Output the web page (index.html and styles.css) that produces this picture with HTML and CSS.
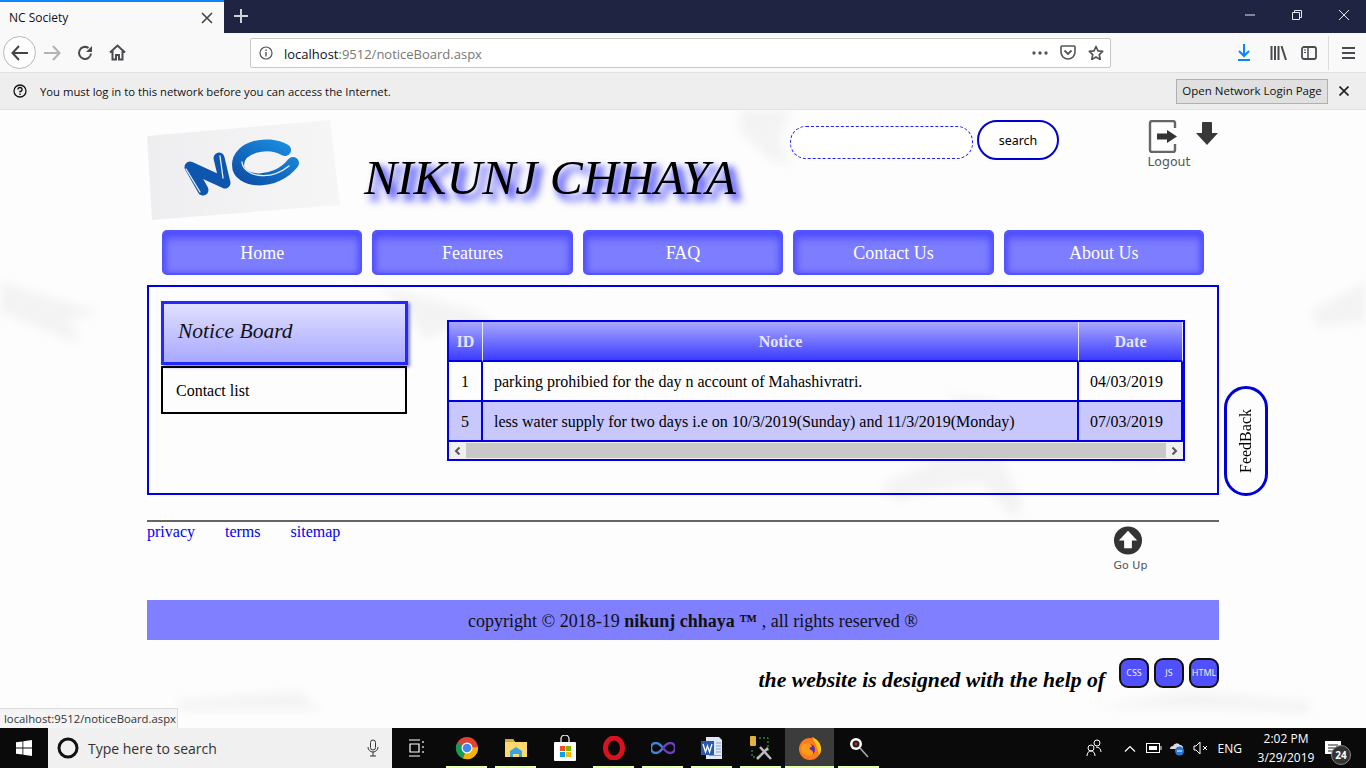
FILE: index.html
```html
<!DOCTYPE html>
<html lang="en">
<head>
<meta charset="utf-8">
<title>NC Society</title>
<link rel="stylesheet" href="styles.css">
</head>
<body>
<div class="tabbar">
  <div class="tab">
    <span class="tab-title">NC Society</span>
    <svg class="tab-close" width="12" height="12" viewBox="0 0 12 12"><path d="M1 1l10 10M11 1L1 11" stroke="#444" stroke-width="1.6"/></svg>
  </div>
  <svg class="tab-new" width="14" height="14" viewBox="0 0 14 14"><path d="M7 0v14M0 7h14" stroke="#cfd0d8" stroke-width="2"/></svg>
  <div class="winctl">
    <svg width="12" height="12" viewBox="0 0 12 12"><path d="M1 6h10" stroke="#e8e8ee" stroke-width="1"/></svg>
    <svg width="12" height="12" viewBox="0 0 12 12"><path d="M1.5 3.5h7v7h-7zM3.5 3.5v-2h7v7h-2" fill="none" stroke="#e8e8ee"/></svg>
    <svg width="12" height="12" viewBox="0 0 12 12"><path d="M1 1l10 10M11 1L1 11" stroke="#e8e8ee" stroke-width="1"/></svg>
  </div>
</div>
<div class="toolbar">
  <div class="back"><svg width="18" height="16" viewBox="0 0 18 16"><path d="M8 1L1.5 8 8 15M2 8h15" fill="none" stroke="#444" stroke-width="2"/></svg></div>
  <svg class="fwd" width="18" height="16" viewBox="0 0 18 16"><path d="M10 1l6.500 7L10 15M16 8H1" fill="none" stroke="#b3b3b3" stroke-width="2"/></svg>
  <svg class="reload" width="16" height="16" viewBox="0 0 16 16"><path d="M14 8.500A6 6 0 1 1 11.500 3" fill="none" stroke="#4a4a4f" stroke-width="2"/><path d="M15 1v6H9z" fill="#4a4a4f"/></svg>
  <svg class="home" width="17" height="17" viewBox="0 0 17 17"><path d="M1 8.500L8.500 1.500 16 8.500M3.500 7v8.500h3.500v-4.500h3v4.500h3.500V7" fill="none" stroke="#4a4a4f" stroke-width="2"/></svg>
  <div class="urlbar">
    <svg class="info" width="14" height="14" viewBox="0 0 14 14"><circle cx="7" cy="7" r="6" fill="none" stroke="#555" stroke-width="1.200"/><path d="M7 6v4.500M7 3.500v1.500" stroke="#555" stroke-width="1.400"/></svg>
    <span class="url"><span class="url-host">localhost</span>:9512/noticeBoard.aspx</span>
    <svg class="dots" width="16" height="4" viewBox="0 0 16 4"><circle cx="2" cy="2" r="1.700" fill="#555"/><circle cx="8" cy="2" r="1.700" fill="#555"/><circle cx="14" cy="2" r="1.700" fill="#555"/></svg>
    <svg class="pocket" width="16" height="15" viewBox="0 0 16 15"><path d="M2 1h12a1 1 0 0 1 1 1v5a7 7 0 0 1-14 0V2a1 1 0 0 1 1-1z" fill="none" stroke="#555" stroke-width="1.600"/><path d="M4.500 5.500L8 9l3.500-3.500" fill="none" stroke="#555" stroke-width="1.800"/></svg>
    <svg class="star" width="16" height="16" viewBox="0 0 16 16"><path d="M8 1.500l2 4.300 4.700.6-3.400 3.300.9 4.700L8 12.100l-4.200 2.300.9-4.700L1.300 6.400 6 5.800z" fill="none" stroke="#555" stroke-width="1.700" stroke-linejoin="round"/></svg>
  </div>
  <svg class="dl" width="14" height="17" viewBox="0 0 14 17"><path d="M7 0v12M2 7l5 5 5-5" fill="none" stroke="#0a84ff" stroke-width="2"/><path d="M1 16h12" stroke="#0a84ff" stroke-width="2"/></svg>
  <svg class="lib" width="17" height="14" viewBox="0 0 17 14"><path d="M1.500 0v14M5 0v14M8.500 0v14M11.500 0l4.500 14" stroke="#4a4a4f" stroke-width="2"/></svg>
  <svg class="side" width="16" height="14" viewBox="0 0 16 14"><rect x="1" y="1" width="14" height="12" rx="2" fill="none" stroke="#4a4a4f" stroke-width="1.800"/><path d="M7 1v12" stroke="#4a4a4f" stroke-width="1.500"/><path d="M3 4h2M3 6.500h2" stroke="#4a4a4f"/></svg>
  <span class="tool-sep"></span>
  <svg class="menu" width="13" height="12" viewBox="0 0 13 12"><path d="M0 1h13M0 6h13M0 11h13" stroke="#4a4a4f" stroke-width="2"/></svg>
</div>
<div class="notify">
  <svg class="help" width="14" height="14" viewBox="0 0 14 14"><circle cx="7" cy="7" r="6" fill="none" stroke="#111" stroke-width="1.300"/><path d="M5 5.500A2 2 0 1 1 7 7.500v1" fill="none" stroke="#111" stroke-width="1.300"/><path d="M7 9.500v1.500" stroke="#111" stroke-width="1.300"/></svg>
  <span class="notify-text">You must log in to this network before you can access the Internet.</span>
  <button class="notify-btn">Open Network Login Page</button>
  <svg class="notify-x" width="10" height="10" viewBox="0 0 10 10"><path d="M.5.500l9 9M9.500.500l-9 9" stroke="#222" stroke-width="1.700"/></svg>
</div>

<div class="page">
  <svg class="watermark" width="1366" height="618" viewBox="0 0 1366 618">
    <g fill="#f3f3f3">
      <path d="M740 0h50l-10 30 10 25-18-5-32-28z"/>
      <path d="M0 172l60 18 40 12-30 8 10 22-20-6-60-24z"/>
      <path d="M1366 172l-56 30 10 15 46-6z"/>
      <path d="M383 178l90 22 24 15-20 12-30-8-20 10z"/>
      <path d="M880 375l60-26 60-3 24 50-12 12-30-36-36 6-50 12z"/>
      <path d="M945 285l55 6-20 18z"/>
      <path d="M1100 345l30-6 60-4-40 18z"/>
      <path d="M180 590l120-8 20 18-140 0z"/>
      <path d="M1100 596l90-14 120 10 0 10z"/>
    </g>
  </svg>
  <div class="wrap">
    <header class="head">
      <svg class="logo" width="193" height="100" viewBox="0 0 193 100">
        <defs>
          <linearGradient id="logoBg" x1="0" y1="0" x2="1" y2="0"><stop offset="0" stop-color="#eeeef0"/><stop offset="1" stop-color="#f6f6f7"/></linearGradient>
          <linearGradient id="logoBlue" x1="0" y1="1" x2="1" y2="0"><stop offset="0" stop-color="#0c4fa8"/><stop offset="1" stop-color="#1a8ee0"/></linearGradient>
        </defs>
        <path d="M0 16L183 0l10 85L5 100z" fill="url(#logoBg)"/>
        <g fill="none" stroke-linecap="round" stroke-linejoin="round">
          <path d="M56 70L43 47 78 63 72 38" stroke="#0d55ad" stroke-width="11"/>
          <path d="M138 30C120 20 91 27 91 45 91 63 128 66 146 43" stroke="url(#logoBlue)" stroke-width="12"/>
          <path d="M39 49L53 72M73 36L76 58M95 42C96 56 122 62 142 46" stroke="#e4f1ff" stroke-width="1.300"/>
        </g>
      </svg>
      <h1 class="brand">NIKUNJ CHHAYA</h1>
      <input class="search-input" type="text" aria-label="search">
      <button class="search-btn">search</button>
      <div class="logout">
        <svg width="30" height="33" viewBox="0 0 30 33"><path d="M27 8V3a2 2 0 0 0-2-2H4a2 2 0 0 0-2 2v27a2 2 0 0 0 2 2h21a2 2 0 0 0 2-2v-6" fill="none" stroke="#666" stroke-width="2.400"/><path d="M9 13.500h10V10l10 6.500L19 23v-3.500H9z" fill="#333"/></svg>
        <span class="logout-text">Logout</span>
      </div>
      <svg class="down" width="22" height="23" viewBox="0 0 22 23"><path d="M6 1a1 1 0 0 1 1-1h8a1 1 0 0 1 1 1v10h6L11 23 0 11h6z" fill="#383838"/></svg>
    </header>

    <nav class="nav">
      <a class="nav-item">Home</a>
      <a class="nav-item">Features</a>
      <a class="nav-item">FAQ</a>
      <a class="nav-item">Contact Us</a>
      <a class="nav-item">About Us</a>
    </nav>

    <main class="main">
      <aside class="side-menu">
        <div class="side-active">Notice Board</div>
        <div class="side-link">Contact list</div>
      </aside>
      <div class="grid-box">
        <table class="grid">
          <colgroup><col class="c-id"><col class="c-notice"><col class="c-date"></colgroup>
          <tr><th>ID</th><th>Notice</th><th>Date</th></tr>
          <tr><td class="center">1</td><td>parking prohibied for the day n account of Mahashivratri.</td><td>04/03/2019</td></tr>
          <tr class="alt"><td class="center">5</td><td>less water supply for two days i.e on 10/3/2019(Sunday) and 11/3/2019(Monday)</td><td>07/03/2019</td></tr>
        </table>
        <div class="hscroll">
          <span class="sc-btn"><svg width="7" height="8" viewBox="0 0 7 8"><path d="M5.500.500L2 4l3.500 3.500" fill="none" stroke="#555" stroke-width="2"/></svg></span>
          <span class="sc-thumb"></span>
          <span class="sc-btn"><svg width="7" height="8" viewBox="0 0 7 8"><path d="M1.500.500L5 4 1.500 7.500" fill="none" stroke="#555" stroke-width="2"/></svg></span>
        </div>
      </div>
    </main>
    <div class="feedback"><span class="feedback-text">FeedBack</span></div>

    <hr class="rule">
    <div class="foot-links">
      <a class="foot-link">privacy</a>
      <a class="foot-link">terms</a>
      <a class="foot-link">sitemap</a>
      <div class="goup">
        <svg width="30" height="29" viewBox="0 0 30 30"><circle cx="15" cy="15" r="14.500" fill="#333"/><path d="M15 5l9.500 10H19v8h-8v-8H5.500z" fill="#fff"/></svg>
        <span class="goup-text">Go Up</span>
      </div>
    </div>
    <div class="copyright">copyright © 2018-19 <b>nikunj chhaya ™</b> , all rights reserved ®</div>
    <div class="credits">
      <span class="credits-text">the website is designed with the help of</span>
      <span class="badge">CSS</span>
      <span class="badge">JS</span>
      <span class="badge">HTML</span>
    </div>
  </div>
  <div class="status">localhost:9512/noticeBoard.aspx</div>
</div>

<div class="taskbar">
  <div class="start"><svg width="16" height="16" viewBox="0 0 16 16"><path d="M0 2.300l6.500-.9v6.200H0zM7.300 1.300L16 0v7.600H7.300zM0 8.400h6.500v6.200L0 13.700zM7.300 8.400H16V16l-8.700-1.300z" fill="#fff"/></svg></div>
  <div class="tsearch">
    <svg width="22" height="22" viewBox="0 0 22 22"><circle cx="11" cy="11" r="9" fill="none" stroke="#111" stroke-width="3"/></svg>
    <span class="tsearch-text">Type here to search</span>
    <svg class="mic" width="12" height="18" viewBox="0 0 12 18"><rect x="3.500" y="1" width="5" height="10" rx="2.500" fill="none" stroke="#333"/><path d="M1 8a5 5 0 0 0 10 0M6 13v4M3 17h6" fill="none" stroke="#333"/></svg>
  </div>
  <div class="apps">
    <span class="app app-tv"><svg width="18" height="18" viewBox="0 0 18 18"><path d="M1 1h11M1 17h11M2 5h9v8H2zM15 2v2M15 7v2M15 12v2" fill="none" stroke="#fff" stroke-width="1.200"/></svg></span>
    <span class="app run"><svg width="24" height="24" viewBox="0 0 24 24"><circle cx="12" cy="12" r="11" fill="#db4437"/><path d="M12 12L2.500 6.500A11 11 0 0 0 8 22.500z" fill="#0f9d58"/><path d="M12 12l11-1a11 11 0 0 1-15 11.500z" fill="#f4b400"/><circle cx="12" cy="12" r="5.500" fill="#fff"/><circle cx="12" cy="12" r="4.300" fill="#4285f4"/></svg></span>
    <span class="app run"><svg width="24" height="20" viewBox="0 0 24 20"><path d="M1 1h8l2 3h12v15H1z" fill="#fbd96f"/><path d="M1 1h8l2 3H1z" fill="#d9a83c"/><path d="M6 19v-6l6-4 6 4v6h-3v-3H9v3z" fill="#3ba4dd"/></svg></span>
    <span class="app"><svg width="22" height="26" viewBox="0 0 22 26"><path d="M7 8V4a4 4 0 0 1 8 0v4" fill="none" stroke="#ddd" stroke-width="1.400"/><rect y="7" width="22" height="19" rx="1" fill="#fff"/><rect x="6" y="11" width="5" height="5" fill="#f25022"/><rect x="12" y="11" width="5" height="5" fill="#7fba00"/><rect x="6" y="17" width="5" height="5" fill="#00a4ef"/><rect x="12" y="17" width="5" height="5" fill="#ffb900"/></svg></span>
    <span class="app run"><svg width="22" height="24" viewBox="0 0 22 24"><ellipse cx="11" cy="12" rx="8.500" ry="10" fill="none" stroke="#d8131f" stroke-width="5"/></svg></span>
    <span class="app run"><svg width="24" height="12" viewBox="0 0 24 12"><path d="M12 6C9 2 7 1 5 1a5 5 0 0 0 0 10c2 0 4-1 7-5z" fill="none" stroke="#3d87d8" stroke-width="2.500"/><path d="M12 6c3-4 5-5 7-5a5 5 0 0 1 0 10c-2 0-4-1-7-5z" fill="none" stroke="#6b3fc4" stroke-width="2.500"/></svg></span>
    <span class="app run"><svg width="22" height="24" viewBox="0 0 22 24"><path d="M5 1h13l3 3v19H5z" fill="#dfe8f4"/><path d="M0 5h13v14H0z" fill="#2a5aa8"/><path d="M15 7h5M15 10h5M15 13h5M15 16h5M8 19.500h12" stroke="#7f9fd0"/><path d="M2 8l2.500 8 2-6 2 6L11 8" fill="none" stroke="#fff" stroke-width="1.300"/></svg></span>
    <span class="app run"><svg width="24" height="26" viewBox="0 0 24 26"><rect x="1" y="1" width="6" height="10" rx="1" fill="#e2b33c"/><path d="M10 3h9v14M3 15v7h6" fill="none" stroke="#4bb54b" stroke-dasharray="2 2"/><path d="M8 24l11-11M11 12l11 12" stroke="#bbb" stroke-width="2.500"/></svg></span>
    <span class="app run active"><svg width="24" height="24" viewBox="0 0 24 24"><circle cx="12" cy="13" r="11" fill="#ff7a1a"/><path d="M14 1c5 2 9 6 9 12 0 3-1 5-2 6-1-6-3-10-7-18z" fill="#ffc21a"/><circle cx="11.500" cy="13.500" r="5.500" fill="#5b2fa8"/><path d="M6 8c4-2 8 0 8 3-3 0-3 2-1 3 3 1 3 6-2 6-4 0-8-3-8-8 0-2 1-3 3-4z" fill="#ff9a1a"/></svg></span>
    <span class="app run"><svg width="20" height="22" viewBox="0 0 20 22"><circle cx="7" cy="7" r="6" fill="#fff"/><circle cx="7" cy="7" r="3.500" fill="#222"/><circle cx="7" cy="7" r="1.500" fill="#d0202a"/><path d="M11 11l8 9" stroke="#aaa" stroke-width="1.600"/></svg></span>
  </div>
  <div class="tray">
    <svg class="tr-people" width="16" height="18" viewBox="0 0 16 18"><circle cx="11" cy="4" r="3" fill="none" stroke="#fff"/><circle cx="5" cy="9" r="3" fill="none" stroke="#fff"/><path d="M1 17c0-3 1.500-5 4-5s4 2 4 5M10 8c3 0 5 2 5 5" fill="none" stroke="#fff"/></svg>
    <svg class="tr-chev" width="12" height="7" viewBox="0 0 12 7"><path d="M1 6.500l5-5 5 5" fill="none" stroke="#fff" stroke-width="1.200"/></svg>
    <svg class="tr-batt" width="16" height="10" viewBox="0 0 16 10"><rect x=".5" y=".5" width="13" height="9" fill="none" stroke="#fff"/><rect x="3" y="3" width="8" height="4" fill="#fff"/><path d="M15 3v4" stroke="#fff"/></svg>
    <svg class="tr-cloud" width="16" height="16" viewBox="0 0 16 16"><path d="M1 9a3 3 0 0 1 3-3 4 4 0 0 1 7-1 3 3 0 0 1 3 4z" fill="#ddd"/><circle cx="10.500" cy="11" r="4.500" fill="#2c78d4"/><path d="M8 11h5" stroke="#fff"/></svg>
    <svg class="tr-vol" width="15" height="14" viewBox="0 0 15 14"><path d="M1 5h2l4-4v12L3 9H1z" fill="none" stroke="#fff"/><path d="M10 5l4 4M14 5l-4 4" stroke="#fff"/></svg>
    <span class="tr-lang">ENG</span>
    <span class="tr-clock"><span>2:02 PM</span><span>3/29/2019</span></span>
    <span class="tr-note">
      <svg width="16" height="13" viewBox="0 0 16 13"><path d="M0 0h16v13H0z" fill="#fff"/><path d="M3 4h10M3 7h10M3 10h10" stroke="#222"/></svg>
      <span class="tr-count">24</span>
    </span>
  </div>
</div>
</body>
</html>
```
FILE: styles.css
```css
* { box-sizing: border-box; }
html, body { margin: 0; padding: 0; }
body {
  width: 1366px;
  height: 768px;
  overflow: hidden;
  display: flex;
  flex-direction: column;
  font-family: "Liberation Serif", serif;
  background: #fdfdfd;
}

/* browser tab strip */
.tabbar { height: 33px; flex: none; background: #1f2443; display: flex; align-items: center; }
.tab {
  width: 224px; height: 33px; background: #f9f9fa; border-top: 2px solid #0a84ff;
  display: flex; align-items: center; padding: 0 11px 0 9px; justify-content: space-between;
}
.tab-title { font: 12px "Open Sans", sans-serif; color: #111; }
.tab-new { margin-left: 10px; margin-top: -2px; }
.winctl { margin-left: auto; display: flex; gap: 35px; padding-right: 16px; margin-top: -4px; }

/* browser toolbar */
.toolbar { height: 40px; flex: none; background: #f9f9fa; display: flex; align-items: center; border-bottom: 1px solid #e0e0e2; }
.back {
  width: 33px; height: 33px; margin-left: 3px; border: 1px solid #b8b8b8; border-radius: 50%;
  background: #fdfdfd; display: flex; align-items: center; justify-content: center;
}
.fwd { margin-left: 7px; }
.reload { margin-left: 16px; }
.home { margin-left: 16px; }
.urlbar {
  width: 861px; height: 30px; margin-left: 124px; background: #fff; border: 1px solid #c8c8ca; border-radius: 2px;
  display: flex; align-items: center; padding-left: 8px;
}
.url { font: 13px "Open Sans", sans-serif; color: #777; margin-left: 11px; padding-top: 2px; }
.url-host { color: #111; }
.dots { margin-left: auto; }
.pocket { margin-left: 12px; }
.star { margin-left: 12px; margin-right: 6px; }
.dl { margin-left: 126px; }
.lib { margin-left: 19px; }
.side { margin-left: 14px; }
.tool-sep { width: 1px; height: 34px; background: #dcdcde; margin-left: 11px; }
.menu { margin-left: 13px; }

/* notification bar */
.notify {
  height: 37px; flex: none; background: #eeeeef; border-bottom: 1px solid #e2e2e4;
  display: flex; align-items: center; padding-left: 13px;
}
.notify-text { font: 11.3px "Open Sans", sans-serif; color: #111; margin-left: 13px; }
.notify-btn {
  margin-left: auto; width: 152px; height: 25px; padding: 0 0 2px; background: #e0e0e0; border: 1px solid #b0b0b0;
  font: 11.5px "Open Sans", sans-serif; color: #111;
}
.notify-x { margin: 0 17px 0 11px; }

/* page */
.page { position: relative; flex: 1; min-height: 0; overflow: hidden; background: #fdfdfd; }
.watermark { position: absolute; left: 0; top: 0; filter: blur(5px); }
.wrap { position: relative; width: 1072px; margin-left: 147px; }
.head { height: 120px; display: flex; align-items: flex-start; }
.logo { margin-top: 10px; flex: none; }
.brand {
  margin: 39px 0 0 24px; width: 426px; flex: none; white-space: nowrap;
  font: italic 400 49.5px "Liberation Serif", serif; color: #000;
  text-shadow: 5px 5px 7px #4d4dff, 6px 7px 10px #8080ff;
}
.search-input {
  width: 183px; height: 33px; margin-top: 16px; flex: none; padding: 0;
  border: 1px dashed #2020ff; border-radius: 16px; background: #fff;
}
.search-btn {
  width: 82px; height: 40px; margin: 10px 0 0 4px; flex: none; padding: 0;
  border: 2px solid #0000d0; border-radius: 20px; background: #fff;
  font: 12.5px "Noto Sans", sans-serif; color: #000;
}
.logout { width: 44px; margin: 10px 0 0 88px; flex: none; display: flex; flex-direction: column; align-items: center; }
.logout svg { margin-left: -12px; }
.logout-text { font: 12.5px "DejaVu Sans", sans-serif; color: #555; line-height: 12px; margin-top: 3px; white-space: nowrap; }
.down { margin: 12px 0 0 5px; flex: none; }

.nav { display: flex; gap: 10px; padding-left: 15px; width: 1057px; height: 45px; }
.nav-item {
  flex: 1; border: 2px solid #5555ff; border-radius: 5px;
  background: #7d7dff; box-shadow: inset 0 6px 8px #4d4dff, inset 0 0 6px #5252ff;
  color: #fff; font-size: 18px; text-align: center; line-height: 42px;
}

.main { margin-top: 10px; height: 210px; border: 2px solid #0000e6; display: flex; align-items: flex-start; }
.side-menu { margin: 14px 0 0 12px; width: 247px; flex: none; }
.side-active {
  height: 64px; border: 3px solid #2626ff; background: linear-gradient(#e0e0ff, #a8a8ff);
  box-shadow: 2px 2px 3px #8080ff;
  font: italic 21.5px "Liberation Serif", serif; line-height: 54px; padding-left: 14px; color: #111;
}
.side-link {
  height: 48px; width: 246px; margin-top: 1px; border: 2px solid #000; font-size: 16px; line-height: 46px; padding-left: 13px;
}
.grid-box { margin: 33px 0 0 39px; width: 738px; height: 141px; border: 2px solid #0000e6; flex: none; }
.grid { width: 734px; border-collapse: separate; border-spacing: 0; table-layout: fixed; font-size: 16px; }
.c-id { width: 34px; }
.c-date { width: 104px; }
.grid th {
  height: 40px; padding: 2px 0 0; background: linear-gradient(#a8a8ff, #3c3cff); color: #e6e6ff; font-weight: 700;
  border-right: 1px solid #e8e8ff; border-bottom: 2px solid #0000e6;
}
.grid td { height: 40px; padding: 1px 0 0 11px; border-right: 2px solid #0000e6; border-bottom: 2px solid #0000e6; white-space: nowrap; }
.grid td.center { padding: 1px 0 0; text-align: center; }
.alt td { background: rgba(190, 190, 255, .85); }
.hscroll { height: 17px; display: flex; background: #f0f0f0; }
.sc-btn { width: 17px; display: flex; align-items: center; justify-content: center; flex: none; }
.sc-thumb { flex: 1; background: #c8c8c8; margin: 1px 0; }

.feedback {
  position: absolute; left: 1077px; top: 276px; width: 44px; height: 110px;
  border: 3px solid #0000d8; border-radius: 22px; background: #fdfdfd;
  display: flex; align-items: center; justify-content: center;
}
.feedback-text { writing-mode: vertical-rl; transform: rotate(180deg); font-size: 16px; }

.rule { margin: 25px 0 0; height: 2px; border: 0; background: #666; }
.foot-links { height: 78px; display: flex; gap: 30px; align-items: flex-start; font-size: 16px; padding-top: 1px; }
.foot-link { color: #0000ff; }
.goup { margin-left: auto; margin-right: 71px; margin-top: 3px; width: 40px; display: flex; flex-direction: column; align-items: center; }
.goup-text { font: 11px "DejaVu Sans", sans-serif; color: #555; margin-top: 4px; margin-left: 5px; white-space: nowrap; }
.copyright { height: 40px; background: #7f7fff; font-size: 18px; line-height: 42px; text-align: center; color: #111; padding-left: 20px; }
.credits { margin-top: 18px; display: flex; justify-content: flex-end; align-items: flex-start; }
.credits-text { font: italic 700 21.7px "Liberation Serif", serif; margin-right: 9px; margin-top: 10px; white-space: nowrap; color: #000; }
.badge {
  width: 30px; height: 30px; border: 2px solid #111; border-radius: 9px; background: #5050ff; color: #eee;
  font: 9px "Noto Sans", sans-serif; line-height: 26px; text-align: center; margin-left: 5px;
}
.status {
  position: absolute; left: 0; bottom: 0; width: 178px; height: 20px; background: #f4f4f5;
  border-top: 1px solid #dcdcdc; border-right: 1px solid #dcdcdc;
  font: 11.3px "Open Sans", sans-serif; color: #333; line-height: 19px; padding-left: 4px; white-space: nowrap;
}

/* taskbar */
.taskbar { height: 40px; flex: none; background: #0a0a0a; display: flex; align-items: stretch; }
.start { width: 48px; display: flex; align-items: center; justify-content: center; }
.tsearch { width: 344px; background: #f0f0f0; display: flex; align-items: center; padding: 0 13px 0 9px; }
.tsearch-text { font: 14px "Open Sans", sans-serif; color: #333; margin-left: 9px; }
.mic { margin-left: auto; }
.apps { display: flex; margin-left: 0; }
.app { width: 49px; display: flex; align-items: center; justify-content: center; position: relative; }
.app-tv { width: 50px; }
.run::after { content: ""; position: absolute; left: 4px; right: 4px; bottom: 0; height: 2px; background: #e6ffb0; }
.active { background: #3c3c3c; }
.active::after { left: 0; right: 0; }
.tray { margin-left: auto; display: flex; align-items: center; color: #fff; padding-right: 18px; }
.tr-chev { margin-left: 22px; }
.tr-batt { margin-left: 10px; }
.tr-cloud { margin-left: 7px; }
.tr-vol { margin-left: 8px; }
.tr-lang { font: 12px "Open Sans", sans-serif; margin-left: 10px; }
.tr-clock { font: 12px/19px "Open Sans", sans-serif; width: 64px; margin-left: 12px; display: flex; flex-direction: column; align-items: center; text-align: center; }
.tr-note { position: relative; width: 30px; height: 40px; display: flex; align-items: flex-start; justify-content: center; padding-top: 13px; }
.tr-count {
  position: absolute; left: 13px; top: 17px; width: 20px; height: 20px; border-radius: 50%; background: #333; border: 1px solid #888;
  font: 700 10px/18px "Open Sans", sans-serif; text-align: center; color: #fff;
}
```
